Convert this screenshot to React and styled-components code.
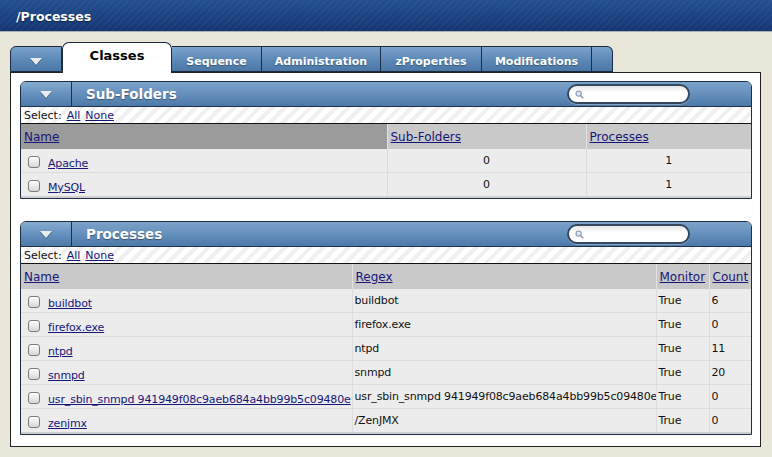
import React from 'react'
import styled, { createGlobalStyle } from 'styled-components'

const Global = createGlobalStyle`
  html, body { margin: 0; padding: 0; }
  body {
    background: #e9e6da;
    font-family: "DejaVu Sans", Verdana, sans-serif;
    font-size: 11px;
    color: #111;
  }
`

const TopBar = styled.div`
  height: 32px;
  display: flex;
  align-items: center;
  padding: 2px 0 0 16px;
  box-sizing: border-box;
  background:
    repeating-linear-gradient(135deg, rgba(255,255,255,0.03) 0 2px, rgba(0,0,0,0) 2px 5px),
    linear-gradient(#24508f, #133673);
  border-bottom: 1px solid #a9aeb3;
  color: #fff;
  font-weight: bold;
  font-size: 12.5px;
  text-shadow: 0 1px 1px rgba(0,0,0,0.5);
`

const TabStrip = styled.div`
  display: flex;
  align-items: flex-end;
  height: 30px;
  margin: 10px 0 0 10px;
`

const Tab = styled.div`
  box-sizing: border-box;
  width: ${p => p.w}px;
  height: ${p => (p.active ? 31 : 26)}px;
  display: flex;
  align-items: center;
  justify-content: center;
  border: 1px solid #1d2b40;
  border-left: ${p => (p.first || p.active ? '1px solid #1d2b40' : 'none')};
  border-bottom: ${p => (p.active ? 'none' : '1px solid #1d2b40')};
  border-radius: ${p => p.radius || '0'};
  background: ${p => (p.active ? '#fff' : 'linear-gradient(#7aa3cb, #5b88b6 55%, #4a77a6)')};
  color: ${p => (p.active ? '#000' : '#fff')};
  font-weight: bold;
  font-size: ${p => (p.active ? '13px' : '11px')};
  text-shadow: ${p => (p.active ? 'none' : '0 1px 1px rgba(0,0,0,0.35)')};
  margin-bottom: ${p => (p.active ? '-1px' : '0')};
  position: relative;
  z-index: ${p => (p.active ? 2 : 1)};
  padding-top: ${p => (p.active ? '0' : '4px')};
  padding-bottom: ${p => (p.active ? '6px' : '0')};
`

const Arrow = styled.span`
  width: 0;
  height: 0;
  border-left: 6px solid transparent;
  border-right: 6px solid transparent;
  border-top: 7px solid #e8ecf0;
  filter: drop-shadow(0 1px 0 rgba(0,0,0,0.35));
`

const Main = styled.div`
  box-sizing: border-box;
  width: 751px;
  margin-left: 10px;
  height: 375px;
  background: #fff;
  border: 1px solid #222;
  padding: 8px 8px 0 9px;
  display: flex;
  flex-direction: column;
  gap: 22px;
`

const Panel = styled.div`
  border: 1px solid #1f2e44;
  border-radius: 6px 6px 0 0;
  overflow: hidden;
  background: #fff;
`

const PanelHead = styled.div`
  height: 24px;
  display: flex;
  align-items: center;
  background: linear-gradient(#7aa2c9, #6892be 45%, #4c79a8);
  border-bottom: 1px solid #203149;
`

const HeadToggle = styled.div`
  width: 51px;
  height: 100%;
  display: flex;
  align-items: center;
  justify-content: center;
  border-right: 1px solid #1f2e44;
  box-sizing: border-box;
  background: linear-gradient(#86acd0, #5f8cba 60%, #4e7aa8);
`

const HeadTitle = styled.div`
  flex: 1;
  padding-left: 14px;
  color: #fff;
  font-weight: bold;
  font-size: 13.5px;
  text-shadow: 0 1px 1px rgba(0,0,0,0.35);
`

const Search = styled.div`
  box-sizing: border-box;
  width: 123px;
  height: 20px;
  border: 2px solid #33475f;
  border-radius: 10px;
  background: linear-gradient(#e6e6e6, #fff 40%);
  display: flex;
  align-items: center;
  padding-left: 6px;
  margin-right: 61px;
  box-shadow: 0 1px 0 rgba(255,255,255,0.3);
`

const SelectRow = styled.div`
  height: 16px;
  display: flex;
  align-items: center;
  gap: 5px;
  padding-left: 3px;
  border-bottom: 1px solid #111;
  background: repeating-linear-gradient(135deg, #fff 0 5px, #f0f0f0 5px 9px);
  font-size: 11px;
`

const Link = styled.a`
  color: #16167a;
  text-decoration: underline;
  cursor: pointer;
`

const Table = styled.table`
  width: 100%;
  border-collapse: collapse;
  table-layout: fixed;
  border-bottom: 2px solid #cfcfcf;
`

const Th = styled.th`
  height: 25px;
  padding: 0 2px 0 3px;
  text-align: left;
  font-weight: normal;
  font-size: 12px;
  background: ${p => (p.sorted ? '#9b9b9b' : '#c9c9c9')};
  border-left: ${p => (p.first ? 'none' : '1px solid #e2e2e2')};
  white-space: nowrap;
  overflow: hidden;
`

const Td = styled.td`
  height: 23px;
  padding: 0 2px;
  background: #ececec;
  border-bottom: 1px solid #dcdcdc;
  border-left: ${p => (p.first ? 'none' : '1px solid #dcdcdc')};
  text-align: ${p => p.align || 'left'};
  white-space: nowrap;
  overflow: hidden;
  vertical-align: middle;
  letter-spacing: -0.15px;
`

const NameCell = styled.div`
  display: flex;
  align-items: center;
  gap: 8px;
  padding: 5px 0 0 5px;
`

const Check = styled.span`
  box-sizing: border-box;
  width: 12px;
  height: 12px;
  border: 1px solid #7c7c7c;
  border-radius: 3px;
  background: linear-gradient(#fdfdfd, #d6d6d6);
  flex: none;
  margin-top: -3px;
`

const Magnifier = () => (
  <svg width="9" height="9" viewBox="0 0 9 9">
    <circle cx="3.6" cy="3.6" r="2.6" fill="#dfe8f2" stroke="#8a9bb0" strokeWidth="1.1" />
    <line x1="5.5" y1="5.5" x2="8.2" y2="8.2" stroke="#8a9bb0" strokeWidth="1.6" />
  </svg>
)

const PanelHeader = ({ title }) => (
  <PanelHead>
    <HeadToggle><Arrow /></HeadToggle>
    <HeadTitle>{title}</HeadTitle>
    <Search><Magnifier /></Search>
  </PanelHead>
)

const Select = () => (
  <SelectRow>
    <span>Select:</span>
    <Link>All</Link>
    <Link>None</Link>
  </SelectRow>
)

const folders = [
  { name: 'Apache', sub: 0, proc: 1 },
  { name: 'MySQL', sub: 0, proc: 1 },
]

const processes = [
  { name: 'buildbot', regex: 'buildbot', count: 6 },
  { name: 'firefox.exe', regex: 'firefox.exe', count: 0 },
  { name: 'ntpd', regex: 'ntpd', count: 11 },
  { name: 'snmpd', regex: 'snmpd', count: 20 },
  { name: 'usr_sbin_snmpd 941949f08c9aeb684a4bb99b5c09480e', regex: 'usr_sbin_snmpd 941949f08c9aeb684a4bb99b5c09480e', count: 0 },
  { name: 'zenjmx', regex: '/ZenJMX', count: 0 },
]

const tabs = [
  { label: 'Sequence', w: 90 },
  { label: 'Administration', w: 119 },
  { label: 'zProperties', w: 101 },
  { label: 'Modifications', w: 110 },
]

export default function App() {
  return (
    <>
      <Global />
      <TopBar>/Processes</TopBar>
      <TabStrip>
        <Tab w={52} first radius="6px 0 0 0"><Arrow /></Tab>
        <Tab w={110} active radius="7px 7px 0 0">Classes</Tab>
        {tabs.map(t => (
          <Tab key={t.label} w={t.w}>{t.label}</Tab>
        ))}
        <Tab w={21} radius="0 6px 0 0" />
      </TabStrip>
      <Main>
        <Panel>
          <PanelHeader title="Sub-Folders" />
          <Select />
          <Table>
            <colgroup>
              <col style={{ width: 366 }} />
              <col style={{ width: 199 }} />
              <col />
            </colgroup>
            <thead>
              <tr>
                <Th first sorted><Link>Name</Link></Th>
                <Th><Link>Sub-Folders</Link></Th>
                <Th><Link>Processes</Link></Th>
              </tr>
            </thead>
            <tbody>
              {folders.map(f => (
                <tr key={f.name}>
                  <Td first><NameCell><Check /><Link>{f.name}</Link></NameCell></Td>
                  <Td align="center">{f.sub}</Td>
                  <Td align="center">{f.proc}</Td>
                </tr>
              ))}
            </tbody>
          </Table>
        </Panel>
        <Panel>
          <PanelHeader title="Processes" />
          <Select />
          <Table>
            <colgroup>
              <col style={{ width: 331 }} />
              <col style={{ width: 304 }} />
              <col style={{ width: 53 }} />
              <col />
            </colgroup>
            <thead>
              <tr>
                <Th first><Link>Name</Link></Th>
                <Th><Link>Regex</Link></Th>
                <Th><Link>Monitor</Link></Th>
                <Th><Link>Count</Link></Th>
              </tr>
            </thead>
            <tbody>
              {processes.map(p => (
                <tr key={p.name}>
                  <Td first><NameCell><Check /><Link>{p.name}</Link></NameCell></Td>
                  <Td>{p.regex}</Td>
                  <Td>True</Td>
                  <Td>{p.count}</Td>
                </tr>
              ))}
            </tbody>
          </Table>
        </Panel>
      </Main>
    </>
  )
}
